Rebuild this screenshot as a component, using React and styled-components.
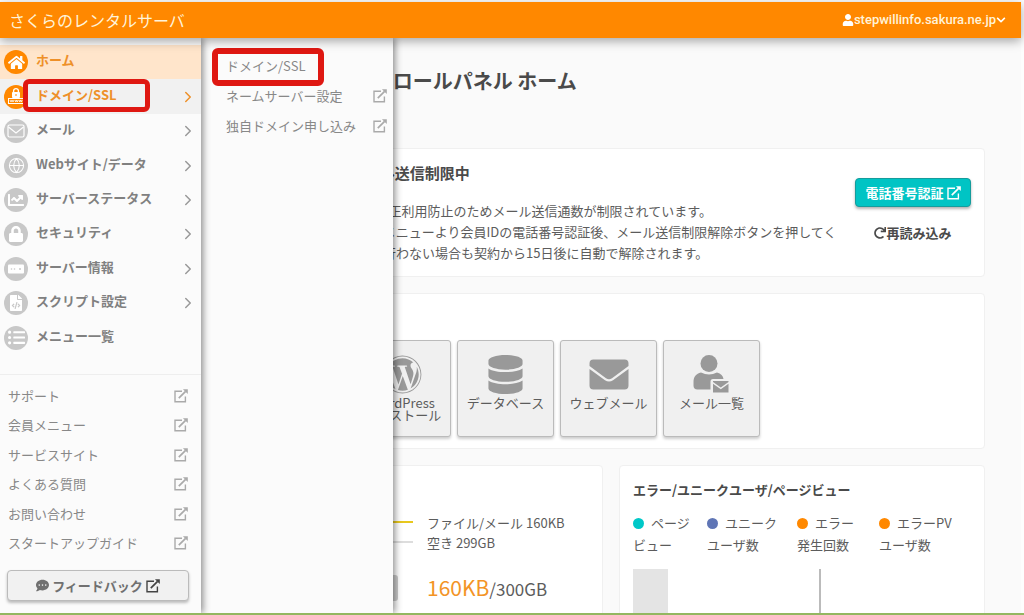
import React from 'react';
import styled, { createGlobalStyle, css } from 'styled-components';
import {
  FaChartLine, FaChevronDown, FaCommentDots, FaDatabase, FaFileCode,
  FaHome, FaListUl, FaLock, FaRedo, FaUser, FaWordpress,
} from 'react-icons/fa';
import { FiChevronRight, FiGlobe } from 'react-icons/fi';

const GlobalStyle = createGlobalStyle`
  * {
    box-sizing: border-box;
  }
  body {
    margin: 0;
    background: #fdfdfd;
    color: #5c5c5c;
    font-family: "Noto Sans CJK JP", "Noto Sans", sans-serif;
    font-size: 13px;
  }
  h1, h2, p, ul {
    margin: 0;
    padding: 0;
  }
  ul {
    list-style: none;
  }
  a {
    color: inherit;
    text-decoration: none;
  }
  button {
    font: inherit;
    cursor: pointer;
  }
  svg {
    display: block;
    flex: none;
  }
`;

const Page = styled.div`
  display: flex;
  flex-direction: column;
  height: 100vh;
  padding: 2px 3px 0 0;
  border-bottom: 2px solid #93b760;
  overflow: hidden;
`;

const Header = styled.header`
  display: flex;
  align-items: center;
  justify-content: space-between;
  flex: none;
  height: 36px;
  padding: 0 15px 0 9px;
  background: #ff8800;
  color: #fff3d9;
  box-shadow: 0 3px 10px rgba(0, 0, 0, 0.35);
  position: relative;
  z-index: 3;
`;

const Brand = styled.a`
  font-size: 16px;
  line-height: 20px;
`;

const Account = styled.button`
  display: flex;
  align-items: center;
  padding: 0;
  border: 0;
  background: none;
  color: inherit;
  font-family: Roboto, sans-serif;
  font-weight: 500;
  line-height: 20px;

  svg {
    color: #fff;
  }
`;

const Body = styled.div`
  display: flex;
  flex: 1;
  min-height: 0;
  position: relative;
`;

const Sidebar = styled.nav`
  display: flex;
  flex-direction: column;
  flex: none;
  width: 201px;
  padding-top: 7px;
  background: #fbfbfb;
  box-shadow: 2px 0 7px rgba(0, 0, 0, 0.45);
  position: relative;
  z-index: 2;
`;

const Menu = styled.ul`
  display: grid;
  grid-auto-rows: 1fr;
  height: 310px;
`;

const MenuItem = styled.li`
  position: relative;
  background: ${(p) => p.$bg || 'transparent'};
`;

const MenuLink = styled.a`
  display: flex;
  align-items: center;
  gap: 8px;
  height: 100%;
  padding: 0 4px;
  color: ${(p) => (p.$active ? '#ee9029' : '#808080')};
  font-weight: 700;
  line-height: 20px;

  span {
    flex: 1;
    padding-bottom: 4px;
  }
`;

const Arrow = styled(FiChevronRight)`
  color: ${(p) => (p.$active ? '#ee9029' : '#999')};
`;

const Round = styled.i`
  display: flex;
  align-items: center;
  justify-content: center;
  width: 24px;
  height: 24px;
  border-radius: 50%;
  background: ${(p) => (p.$active ? '#ff8800' : '#c8c8c8')};
  color: #fff;
`;

const Links = styled.ul`
  display: grid;
  grid-auto-rows: 1fr;
  height: 184px;
  margin-top: 19px;
  padding-top: 6px;
  border-top: 1px solid #eee;
`;

const OuterLink = styled.a`
  display: flex;
  align-items: center;
  justify-content: space-between;
  height: 100%;
  padding: 0 13px 0 8px;
  color: #888;
  line-height: 20px;

  svg {
    color: #aaa;
  }
`;

const buttonShape = css`
  display: flex;
  align-items: center;
  justify-content: center;
  gap: 3px;
  border-radius: 4px;
  line-height: 20px;
`;

const Feedback = styled.button`
  ${buttonShape}
  height: 31px;
  margin: 12px 12px 0 7px;
  border: 1px solid #bbb;
  background: #f1f1f1;
  color: #707070;
  font-weight: 700;
  box-shadow: 0 2px 3px rgba(0, 0, 0, 0.25);

  svg:last-child {
    color: #444;
  }
`;

const Submenu = styled.nav`
  position: absolute;
  top: 0;
  bottom: 0;
  left: 201px;
  z-index: 1;
  width: 192px;
  padding-top: 13px;
  background: #fbfbfb;
  box-shadow: 2px 0 7px rgba(0, 0, 0, 0.45);
`;

const SubItem = styled.li`
  height: 30px;
  padding-left: 17px;
  position: relative;

  a {
    padding-right: 6px;
  }
`;

const mark = css`
  position: absolute;
  border-radius: 6px;
  pointer-events: none;
`;

const MenuMark = styled.div`
  ${mark}
  top: 0;
  left: 23px;
  width: 127px;
  height: 33px;
  border: 5px solid #df1812;
`;

const SubMark = styled.div`
  ${mark}
  top: -3px;
  left: 11px;
  width: 112px;
  height: 38px;
  border: 6px solid #df1812;
`;

const Main = styled.main`
  display: flex;
  flex-direction: column;
  flex: 1;
  gap: 16px;
  min-width: 0;
  padding: 0 36px;
  background: #fafafa;
`;

const PageTitle = styled.h1`
  padding: 28px 16px 36px;
  color: #4a4a4a;
  font-size: 20px;
  font-weight: 700;
  line-height: 30px;
  white-space: nowrap;
`;

const Card = styled.section`
  padding: 13px 13px 11px;
  border: 1px solid #f0f0f0;
  border-radius: 4px;
  background: #fff;
  white-space: nowrap;
`;

const CardTitle = styled.h2`
  color: #4a4a4a;
  font-size: ${(p) => (p.$large ? 15 : 13)}px;
  font-weight: 700;
  line-height: 22px;
`;

const Notice = styled(Card)`
  display: flex;
  justify-content: space-between;
  padding: 13px 13px 13px 15px;

  p {
    margin-top: 16px;
    line-height: 21px;
  }
`;

const NoticeActions = styled.div`
  display: flex;
  flex-direction: column;
  align-items: center;
  gap: 16px;
  padding-top: 16px;
`;

const Verify = styled.button`
  ${buttonShape}
  width: 116px;
  height: 29px;
  padding: 0;
  border: 1px solid #159c9c;
  background: #00c4c4;
  color: #fff;
  font-weight: 700;
  box-shadow: 0 2px 3px rgba(0, 0, 0, 0.3);
`;

const Reload = styled.button`
  display: flex;
  align-items: center;
  padding: 0;
  border: 0;
  background: none;
  color: #4a4a4a;
  font-weight: 700;
  line-height: 20px;
`;

const Tiles = styled.div`
  display: flex;
  gap: 6px;
  margin-top: 11px;
`;

const Tile = styled.a`
  display: flex;
  flex-direction: column;
  align-items: center;
  width: 97px;
  height: 97px;
  padding-top: 14px;
  border: 1px solid #bbb;
  border-radius: 3px;
  background: #f0f0f0;
  box-shadow: 0 2px 3px rgba(0, 0, 0, 0.2);
  line-height: 12px;
  text-align: center;

  svg {
    margin-bottom: 3px;
    color: #999;
  }
`;

const Columns = styled.div`
  display: grid;
  grid-template-columns: 1fr 1fr;
  gap: 16px;
  flex: 1;
`;

const Storage = styled.div`
  display: flex;
  gap: 10px;
  margin-top: 11px;
`;

const StorageList = styled.div`
  display: grid;
  grid-template-columns: 30px 1fr;
  grid-template-rows: 20px 20px 72px;
  column-gap: 14px;
  align-items: center;
`;

const Stroke = styled.i`
  height: 2px;
  background: ${(p) => p.$color};
`;

const Disk = styled.i`
  width: 15px;
  height: 26px;
  border-radius: 3px;
  background: #ccc;
`;

const Usage = styled.p`
  font-size: 17px;
  line-height: 30px;

  strong {
    color: #f39426;
    font-size: 21px;
    font-weight: 400;
  }
`;

const Legend = styled.ul`
  display: grid;
  grid-template-columns: 74px 90px 82px 1fr;
  margin-top: 11px;
  line-height: 22px;
`;

const Dot = styled.i`
  display: inline-block;
  width: 11px;
  height: 11px;
  margin-right: 7px;
  border-radius: 50%;
  background: ${(p) => p.$color};
  vertical-align: -1px;
`;

const Chart = styled.svg`
  width: 100%;
  height: 60px;
  margin-top: 13px;
`;

function ExternalIcon({ size = 14 }) {
  return (
    <svg width={size} height={size} viewBox="0 0 14 14" fill="none" stroke="currentColor" strokeWidth="1.4">
      <path d="M8 2.2H1v10.6h10.4V7.6" />
      <path d="M4.8 9.2L11.6 2.4" strokeWidth="1.7" />
      <path d="M8.9 0.2H13.8V5.1z" fill="currentColor" stroke="none" />
    </svg>
  );
}

function DomainIcon() {
  return (
    <svg width="20" height="20" viewBox="0 0 20 20" fill="none" stroke="#fff">
      <path d="M7.6 5.5V4a2.4 2.4 0 0 1 4.8 0v1.5" strokeWidth="1.4" />
      <rect x="6" y="5" width="8" height="6" rx="1" fill="#fff" stroke="none" />
      <path d="M10 7v2" stroke="#ff8800" />
      <rect x="2.5" y="11.5" width="15" height="5" />
      <path d="M4 13l1 2 1-2 1 2 1-2M9 13l.8 2 .8-2 .8 2 .8-2M13 13l.8 2 .8-2 .8 2 .8-2" strokeWidth="0.8" />
    </svg>
  );
}

function MailOutlineIcon() {
  return (
    <svg width="18" height="14" viewBox="0 0 18 14" fill="none" stroke="currentColor" strokeWidth="1.2">
      <rect x="1" y="1" width="16" height="12" rx="1.5" />
      <path d="M1.5 3L9 9l7.5-6" />
    </svg>
  );
}

function ServerIcon() {
  return (
    <svg width="18" height="10" viewBox="0 0 18 10">
      <rect x="1" y="0.5" width="16" height="9" rx="1" fill="#fff" />
      <g fill="#c8c8c8">
        <circle cx="4.5" cy="5" r="0.8" />
        <circle cx="7.5" cy="5" r="0.8" />
        <circle cx="13" cy="5" r="1" />
      </g>
    </svg>
  );
}

function EnvelopeIcon() {
  return (
    <svg width="40" height="39" viewBox="0 1 40 39" fill="currentColor">
      <path d="M0.5 12V9.500a4 4 0 0 1 4-4h31a4 4 0 0 1 4 4V12L23 24.200a5 5 0 0 1-6 0z" />
      <path d="M0.5 15L16 26.200a7 7 0 0 0 8 0L39.500 15v16.500a4 4 0 0 1-4 4h-31a4 4 0 0 1-4-4z" />
    </svg>
  );
}

function UserMailIcon() {
  return (
    <svg width="40" height="39" viewBox="1 1 40 39" fill="currentColor">
      <circle cx="18" cy="9.5" r="8.5" />
      <path d="M10 18.500q8 4 16 0c4 1 6 3.500 6.500 6.500H22a2.500 2.500 0 0 0-2.500 2.500v8H6.500a4 4 0 0 1-4-4V28c0-5 2.500-8.500 7.500-9.500z" />
      <path d="M22 28v-1h15.500v1l-7.700 5.500z" />
      <path d="M22 29.800l7.800 5.400 7.700-5.400V38.500H22z" />
    </svg>
  );
}

const menu = [
  { label: 'ホーム', icon: <FaHome size={17} />, active: true, bg: '#ffe5cb' },
  { label: 'ドメイン/SSL', icon: <DomainIcon />, active: true, bg: '#f1f1f1', arrow: true, marked: true },
  { label: 'メール', icon: <MailOutlineIcon />, arrow: true },
  { label: 'Webサイト/データ', icon: <FiGlobe size={17} strokeWidth={1.5} />, arrow: true },
  { label: 'サーバーステータス', icon: <FaChartLine size={16} />, arrow: true },
  { label: 'セキュリティ', icon: <FaLock size={16} />, arrow: true },
  { label: 'サーバー情報', icon: <ServerIcon />, arrow: true },
  { label: 'スクリプト設定', icon: <FaFileCode size={16} />, arrow: true },
  { label: 'メニュー一覧', icon: <FaListUl size={17} /> },
];

const links = ['サポート', '会員メニュー', 'サービスサイト', 'よくある質問', 'お問い合わせ', 'スタートアップガイド'];

const submenu = [
  { label: 'ドメイン/SSL', marked: true },
  { label: 'ネームサーバー設定', external: true },
  { label: '独自ドメイン申し込み', external: true },
];

const tiles = [
  { label: 'ファイル', icon: <FaFileCode size={39} /> },
  { label: <>WordPress<br />インストール</>, icon: <FaWordpress size={39} /> },
  { label: 'データベース', icon: <FaDatabase size={39} /> },
  { label: 'ウェブメール', icon: <EnvelopeIcon /> },
  { label: 'メール一覧', icon: <UserMailIcon /> },
];

const legend = [
  { color: '#00c8c8', first: 'ページ', second: 'ビュー' },
  { color: '#5f75b5', first: 'ユニーク', second: 'ユーザ数' },
  { color: '#ff8800', first: 'エラー', second: '発生回数' },
  { color: '#ff8800', first: 'エラーPV', second: 'ユーザ数' },
];

export default function App() {
  return (
    <Page>
      <GlobalStyle />
      <Header>
        <Brand href="#">さくらのレンタルサーバ</Brand>
        <Account>
          <FaUser size={12} />
          stepwillinfo.sakura.ne.jp
          <FaChevronDown size={10} />
        </Account>
      </Header>
      <Body>
        <Sidebar>
          <Menu>
            {menu.map((item) => (
              <MenuItem key={item.label} $bg={item.bg}>
                <MenuLink href="#" $active={item.active}>
                  <Round $active={item.active}>{item.icon}</Round>
                  <span>{item.label}</span>
                  {item.arrow && <Arrow size={18} $active={item.active} />}
                </MenuLink>
                {item.marked && <MenuMark />}
              </MenuItem>
            ))}
          </Menu>
          <Links>
            {links.map((label) => (
              <li key={label}>
                <OuterLink href="#">{label}<ExternalIcon /></OuterLink>
              </li>
            ))}
          </Links>
          <Feedback>
            <FaCommentDots size={13} />
            フィードバック
            <ExternalIcon />
          </Feedback>
        </Sidebar>

        <Submenu>
          <ul>
            {submenu.map((item) => (
              <SubItem key={item.label}>
                <OuterLink href="#">
                  {item.label}
                  {item.external && <ExternalIcon />}
                </OuterLink>
                {item.marked && <SubMark />}
              </SubItem>
            ))}
          </ul>
        </Submenu>

        <Main>
          <PageTitle>サーバーコントロールパネル ホーム</PageTitle>
          <Notice>
            <div>
              <CardTitle $large>【重要】 現在 メール送信制限中</CardTitle>
              <p>
                現在、会員 ID などの不正利用防止のためメール送信通数が制限されています。<br />
                お手数ですが、左側のメニューより会員IDの電話番号認証後、メール送信制限解除ボタンを押してく<br />
                ださい。なお、認証を行わない場合も契約から15日後に自動で解除されます。
              </p>
            </div>
            <NoticeActions>
              <Verify>電話番号認証<ExternalIcon /></Verify>
              <Reload><FaRedo size={12} />再読み込み</Reload>
            </NoticeActions>
          </Notice>

          <Card>
            <CardTitle>よく使う機能</CardTitle>
            <Tiles>
              {tiles.map((tile, i) => (
                <Tile key={i} href="#">
                  {tile.icon}
                  <span>{tile.label}</span>
                </Tile>
              ))}
            </Tiles>
          </Card>

          <Columns>
            <Card>
              <CardTitle>ディスク使用量</CardTitle>
              <Storage>
                <svg width="122" height="110" viewBox="0 0 122 110">
                  <circle cx="55" cy="55" r="42" fill="none" stroke="#ddd" strokeWidth="14" />
                </svg>
                <StorageList>
                  <Stroke $color="#e8c81e" />
                  <span>ファイル/メール 160KB</span>
                  <Stroke $color="#ddd" />
                  <span>空き 299GB</span>
                  <Disk />
                  <Usage><strong>160KB</strong>/300GB</Usage>
                </StorageList>
              </Storage>
            </Card>
            <Card>
              <CardTitle>エラー/ユニークユーザ/ページビュー</CardTitle>
              <Legend>
                {legend.map((item) => (
                  <li key={item.first}>
                    <Dot $color={item.color} />
                    {item.first}<br />
                    {item.second}
                  </li>
                ))}
              </Legend>
              <Chart>
                <rect width="35" height="60" fill="#e4e4e4" />
                <rect x="186" width="2" height="60" fill="#bbb" />
              </Chart>
            </Card>
          </Columns>
        </Main>
      </Body>
    </Page>
  );
}
